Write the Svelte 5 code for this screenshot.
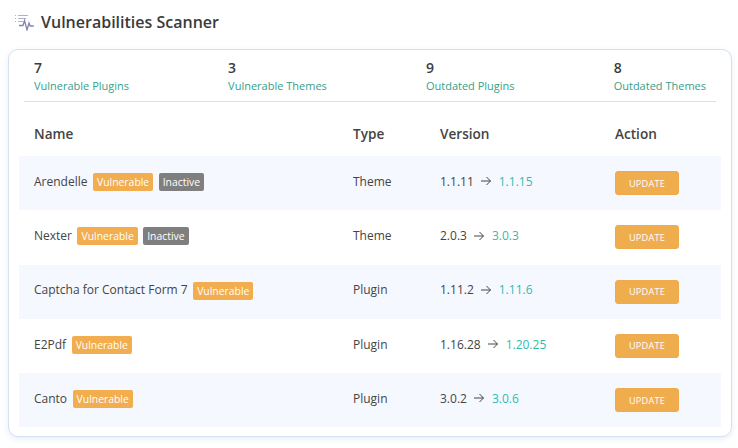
<script>
  const stats = [
    { n: '7', label: 'Vulnerable Plugins' },
    { n: '3', label: 'Vulnerable Themes' },
    { n: '9', label: 'Outdated Plugins' },
    { n: '8', label: 'Outdated Themes' }
  ];
  const rows = [
    { name: 'Arendelle', inactive: true, type: 'Theme', from: '1.1.11', to: '1.1.15' },
    { name: 'Nexter', inactive: true, type: 'Theme', from: '2.0.3', to: '3.0.3' },
    { name: 'Captcha for Contact Form 7', inactive: false, type: 'Plugin', from: '1.11.2', to: '1.11.6' },
    { name: 'E2Pdf', inactive: false, type: 'Plugin', from: '1.16.28', to: '1.20.25' },
    { name: 'Canto', inactive: false, type: 'Plugin', from: '3.0.2', to: '3.0.6' }
  ];
</script>

<div class="page">
  <header class="title">
    <svg class="icon" width="21" height="18" viewBox="0 0 21 18" fill="none" stroke="#8383ad" stroke-width="1">
      <path d="M1 2.5h1M1 5.5h1M1 8.5h1M4 2.5h10M4 5.5h8M4 8.5h5" stroke="#b0b0cc" />
      <path d="M5 12.5h4l1.5-5 2.5 9.5 2-7 1.2 3h3.6" stroke-width="1.3" />
    </svg>
    <h1>Vulnerabilities Scanner</h1>
  </header>

  <section class="card">
    <div class="stats">
      {#each stats as s}
        <div class="stat">
          <div class="num">{s.n}</div>
          <div class="label">{s.label}</div>
        </div>
      {/each}
    </div>

    <div class="row head">
      <div>Name</div>
      <div>Type</div>
      <div>Version</div>
      <div>Action</div>
    </div>

    {#each rows as r, i}
      <div class="row item" class:odd={i % 2 === 0}>
        <div class="name">
          <span class="text">{r.name}</span>
          <span class="badge orange">Vulnerable</span>
          {#if r.inactive}<span class="badge grey">Inactive</span>{/if}
        </div>
        <div class="text">{r.type}</div>
        <div class="version text">
          <span>{r.from}</span>
          <svg width="12" height="10" viewBox="0 0 12 10" fill="none" stroke="#444" stroke-width="1">
            <path d="M1 5h9.5M6.5 1l4 4-4 4" />
          </svg>
          <span class="to">{r.to}</span>
        </div>
        <div><button type="button">UPDATE</button></div>
      </div>
    {/each}
  </section>
</div>

<style>
  :global(body) {
    margin: 0;
    background: #fff;
  }
  .page {
    width: 738px;
    height: 448px;
    box-sizing: border-box;
    padding: 10px 6px 0 8px;
    font-family: "Open Sans", "Noto Sans", sans-serif;
    color: #3d3d3d;
  }
  .title {
    display: flex;
    align-items: center;
    gap: 6px;
    height: 24px;
    padding-left: 6px;
    margin-bottom: 15px;
  }
  .icon {
    flex: none;
  }
  h1 {
    margin: 0;
    font-size: 16px;
    font-weight: 600;
    color: #3a3a3a;
    line-height: 24px;
  }
  .card {
    height: 388px;
    box-sizing: border-box;
    border: 1px solid #d3e1f3;
    border-radius: 10px;
    padding: 0 10px;
    box-shadow: 0 2px 6px rgba(60, 80, 120, 0.1);
    background: #fff;
  }
  .stats {
    display: flex;
    justify-content: space-between;
    margin: 0 5px;
    padding: 8px 10px 7px;
    height: 52px;
    box-sizing: border-box;
    border-bottom: 1px solid #d3e1f3;
  }
  .num {
    font-size: 14px;
    font-weight: 600;
    line-height: 20px;
  }
  .label {
    font-size: 11px;
    line-height: 16px;
    color: #37a08c;
  }
  .row {
    display: grid;
    grid-template-columns: 319px 87px 175px 1fr;
    padding-left: 15px;
    align-items: center;
    font-size: 12px;
    box-sizing: border-box;
  }
  .head {
    height: 54px;
    padding-top: 8px;
    font-size: 13.6px;
    font-weight: 600;
    color: #444;
  }
  .item {
    height: 54.25px;
    padding-bottom: 2px;
    color: #444;
  }
  .odd {
    background: #f5f8ff;
  }
  .text {
    padding-bottom: 1.4px;
  }
  .name {
    display: flex;
    align-items: center;
    gap: 5.5px;
  }
  .badge {
    display: inline-block;
    height: 18px;
    line-height: 18px;
    padding: 0 4px;
    border-radius: 2px;
    color: #fff;
    font-size: 10.4px;
    font-weight: 500;
  }
  .orange {
    background: #f1ad4e;
  }
  .grey {
    background: #7f7f7f;
  }
  .version {
    display: flex;
    align-items: center;
    gap: 6.5px;
  }
  .to {
    color: #2fbcb0;
  }
  button {
    width: 64px;
    height: 24px;
    margin-top: 2px;
    padding: 0;
    border: 1px solid #eeaa4c;
    border-radius: 3px;
    background: #f0ad4e;
    color: #fff;
    font-family: inherit;
    font-size: 9.2px;
    font-weight: 500;
    letter-spacing: 0.2px;
    display: block;
  }
</style>
